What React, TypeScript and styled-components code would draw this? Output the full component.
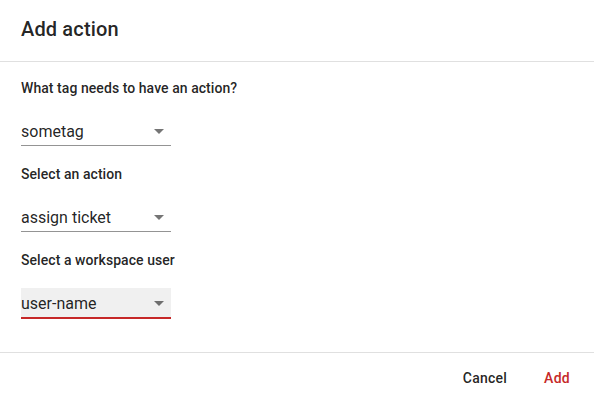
import React from "react";
import styled, { createGlobalStyle } from "styled-components";

const Global = createGlobalStyle`
  html, body { margin: 0; padding: 0; background: #fff; }
  body { font-family: Roboto, "Noto Sans", Arial, sans-serif; color: rgba(0,0,0,0.87); }
  * { box-sizing: border-box; }
`;

const Dialog = styled.div`
  width: 594px;
  height: 402px;
  display: flex;
  flex-direction: column;
  background: #fff;
  overflow: hidden;
`;

const Header = styled.header`
  height: 62px;
  padding: 13px 21px 0;
  border-bottom: 1px solid #e0e0e0;
`;

const Title = styled.h2`
  margin: 0;
  font-size: 20px;
  line-height: 32px;
  font-weight: 500;
  letter-spacing: 0.15px;
  color: rgba(0,0,0,0.87);
`;

const Content = styled.div`
  flex: 1;
  padding: 16px 21px 0;
  display: flex;
  flex-direction: column;
  gap: 18px;
`;

const Label = styled.div`
  font-size: 14px;
  line-height: 20px;
  font-weight: 500;
  letter-spacing: 0.06px;
  color: rgba(0,0,0,0.87);
`;

const Select = styled.div<{ $focused?: boolean }>`
  position: relative;
  width: 150px;
  height: 30px;
  padding-top: 2px;
  display: flex;
  align-items: center;
  background: ${(p) => (p.$focused ? "#f0f0f0" : "transparent")};
  border-bottom: 1px solid rgba(0,0,0,0.42);
  font-size: 16px;
  line-height: 20px;
  color: rgba(0,0,0,0.87);
  &::after {
    content: "";
    display: ${(p) => (p.$focused ? "block" : "none")};
    position: absolute;
    left: 0;
    right: 0;
    bottom: -2px;
    height: 2px;
    background: #c62828;
  }
`;

const Value = styled.span`
  flex: 1;
`;

const Arrow = styled.span`
  width: 0;
  height: 0;
  margin-right: 7px;
  border-left: 5px solid transparent;
  border-right: 5px solid transparent;
  border-top: 5px solid rgba(0,0,0,0.54);
`;

const Footer = styled.footer`
  border-top: 1px solid #e0e0e0;
  padding: 7px 5px 6px;
  display: flex;
  justify-content: flex-end;
  gap: 8px;
`;

const Button = styled.button<{ $primary?: boolean }>`
  min-width: 64px;
  height: 36px;
  padding: 0 8px;
  border: none;
  background: transparent;
  font-family: Roboto, "Noto Sans", Arial, sans-serif;
  font-size: 14px;
  font-weight: 500;
  letter-spacing: 0.25px;
  color: ${(p) => (p.$primary ? "#c62828" : "rgba(0,0,0,0.87)")};
  cursor: pointer;
`;

const fields = [
  { label: "What tag needs to have an action?", value: "sometag" },
  { label: "Select an action", value: "assign ticket" },
  { label: "Select a workspace user", value: "user-name", focused: true },
];

export default function App() {
  return (
    <>
      <Global />
      <Dialog>
        <Header>
          <Title>Add action</Title>
        </Header>
        <Content>
          {fields.map((f) => (
            <React.Fragment key={f.label}>
              <Label>{f.label}</Label>
              <Select $focused={f.focused}>
                <Value>{f.value}</Value>
                <Arrow />
              </Select>
            </React.Fragment>
          ))}
        </Content>
        <Footer>
          <Button>Cancel</Button>
          <Button $primary>Add</Button>
        </Footer>
      </Dialog>
    </>
  );
}
